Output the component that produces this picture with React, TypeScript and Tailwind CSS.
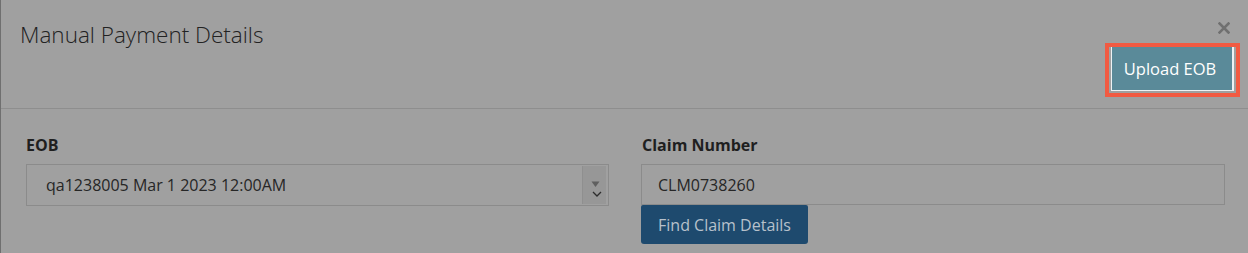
import React from "react";

export default function App() {
  return (
    <div
      className="w-[1248px] h-[253px] bg-[#a0a0a0] border-l border-[#6f6f6f] overflow-hidden"
      style={{ fontFamily: '"Open Sans", "Liberation Sans", sans-serif' }}
    >
      <div className="h-[109px] border-b border-[#8e8e8e] flex justify-between">
        <div className="pl-[19px] pt-[19px] text-[22.5px] leading-[32px] font-light text-[#222222]">
          Manual Payment Details
        </div>
        <div className="flex flex-col items-end pr-[8px]">
          <div className="mt-[22px] mr-[10px] h-[12px] w-[12px]">
            <svg width="12" height="12" viewBox="0 0 12 12">
              <path d="M1.5 1.5 L10.5 10.5 M10.5 1.5 L1.5 10.5" stroke="#707070" strokeWidth="2.6" strokeLinecap="square" />
            </svg>
          </div>
          <div className="mt-[9px] w-[135px] h-[54px] border-4 border-[#f15a42] flex items-start pl-[2px]">
            <button className="w-[123px] h-[44px] pr-[4px] bg-[#5a8a99] border-l border-r-2 border-b border-[#eef2f4] text-white text-[16.5px] leading-[24px]">
              Upload EOB
            </button>
          </div>
        </div>
      </div>
      <div className="flex gap-[32px] pl-[25px] pr-[23px] pt-[24px]">
        <div className="w-[583px] flex flex-col">
          <div className="text-[16px] leading-[24px] font-bold text-[#1f1f1f] mb-[7px]">EOB</div>
          <div className="h-[42px] border border-[#8b8b8b] flex items-center justify-between">
            <span className="pl-[19px] text-[16px] text-[#262626]">qa1238005 Mar 1 2023 12:00AM</span>
            <div className="w-[24px] h-[38px] mr-[2px] bg-[#979797] border-l border-[#8f8f8f] relative">
              <svg className="absolute left-0 top-0" width="24" height="38" viewBox="0 0 24 38">
                <path d="M8.5 15.5 L16.5 15.5 L12.5 21 Z" fill="#5f5f5f" />
                <path d="M10 26 L14 30 L18 26" stroke="#2d2d2d" strokeWidth="1.3" fill="none" />
              </svg>
            </div>
          </div>
        </div>
        <div className="w-[584px] flex flex-col">
          <div className="text-[16px] leading-[24px] font-bold text-[#1f1f1f] mb-[7px] pl-[1px]">Claim Number</div>
          <div className="h-[41px] border border-[#8b8b8b] flex items-center">
            <span className="pl-[16px] text-[16px] text-[#262626]">CLM0738260</span>
          </div>
          <button className="w-[167px] h-[39px] bg-[#1e4a6e] rounded-b-[3px] rounded-t-[2px] text-[16px] text-[#b7c1cb]">
            Find Claim Details
          </button>
        </div>
      </div>
    </div>
  );
}
